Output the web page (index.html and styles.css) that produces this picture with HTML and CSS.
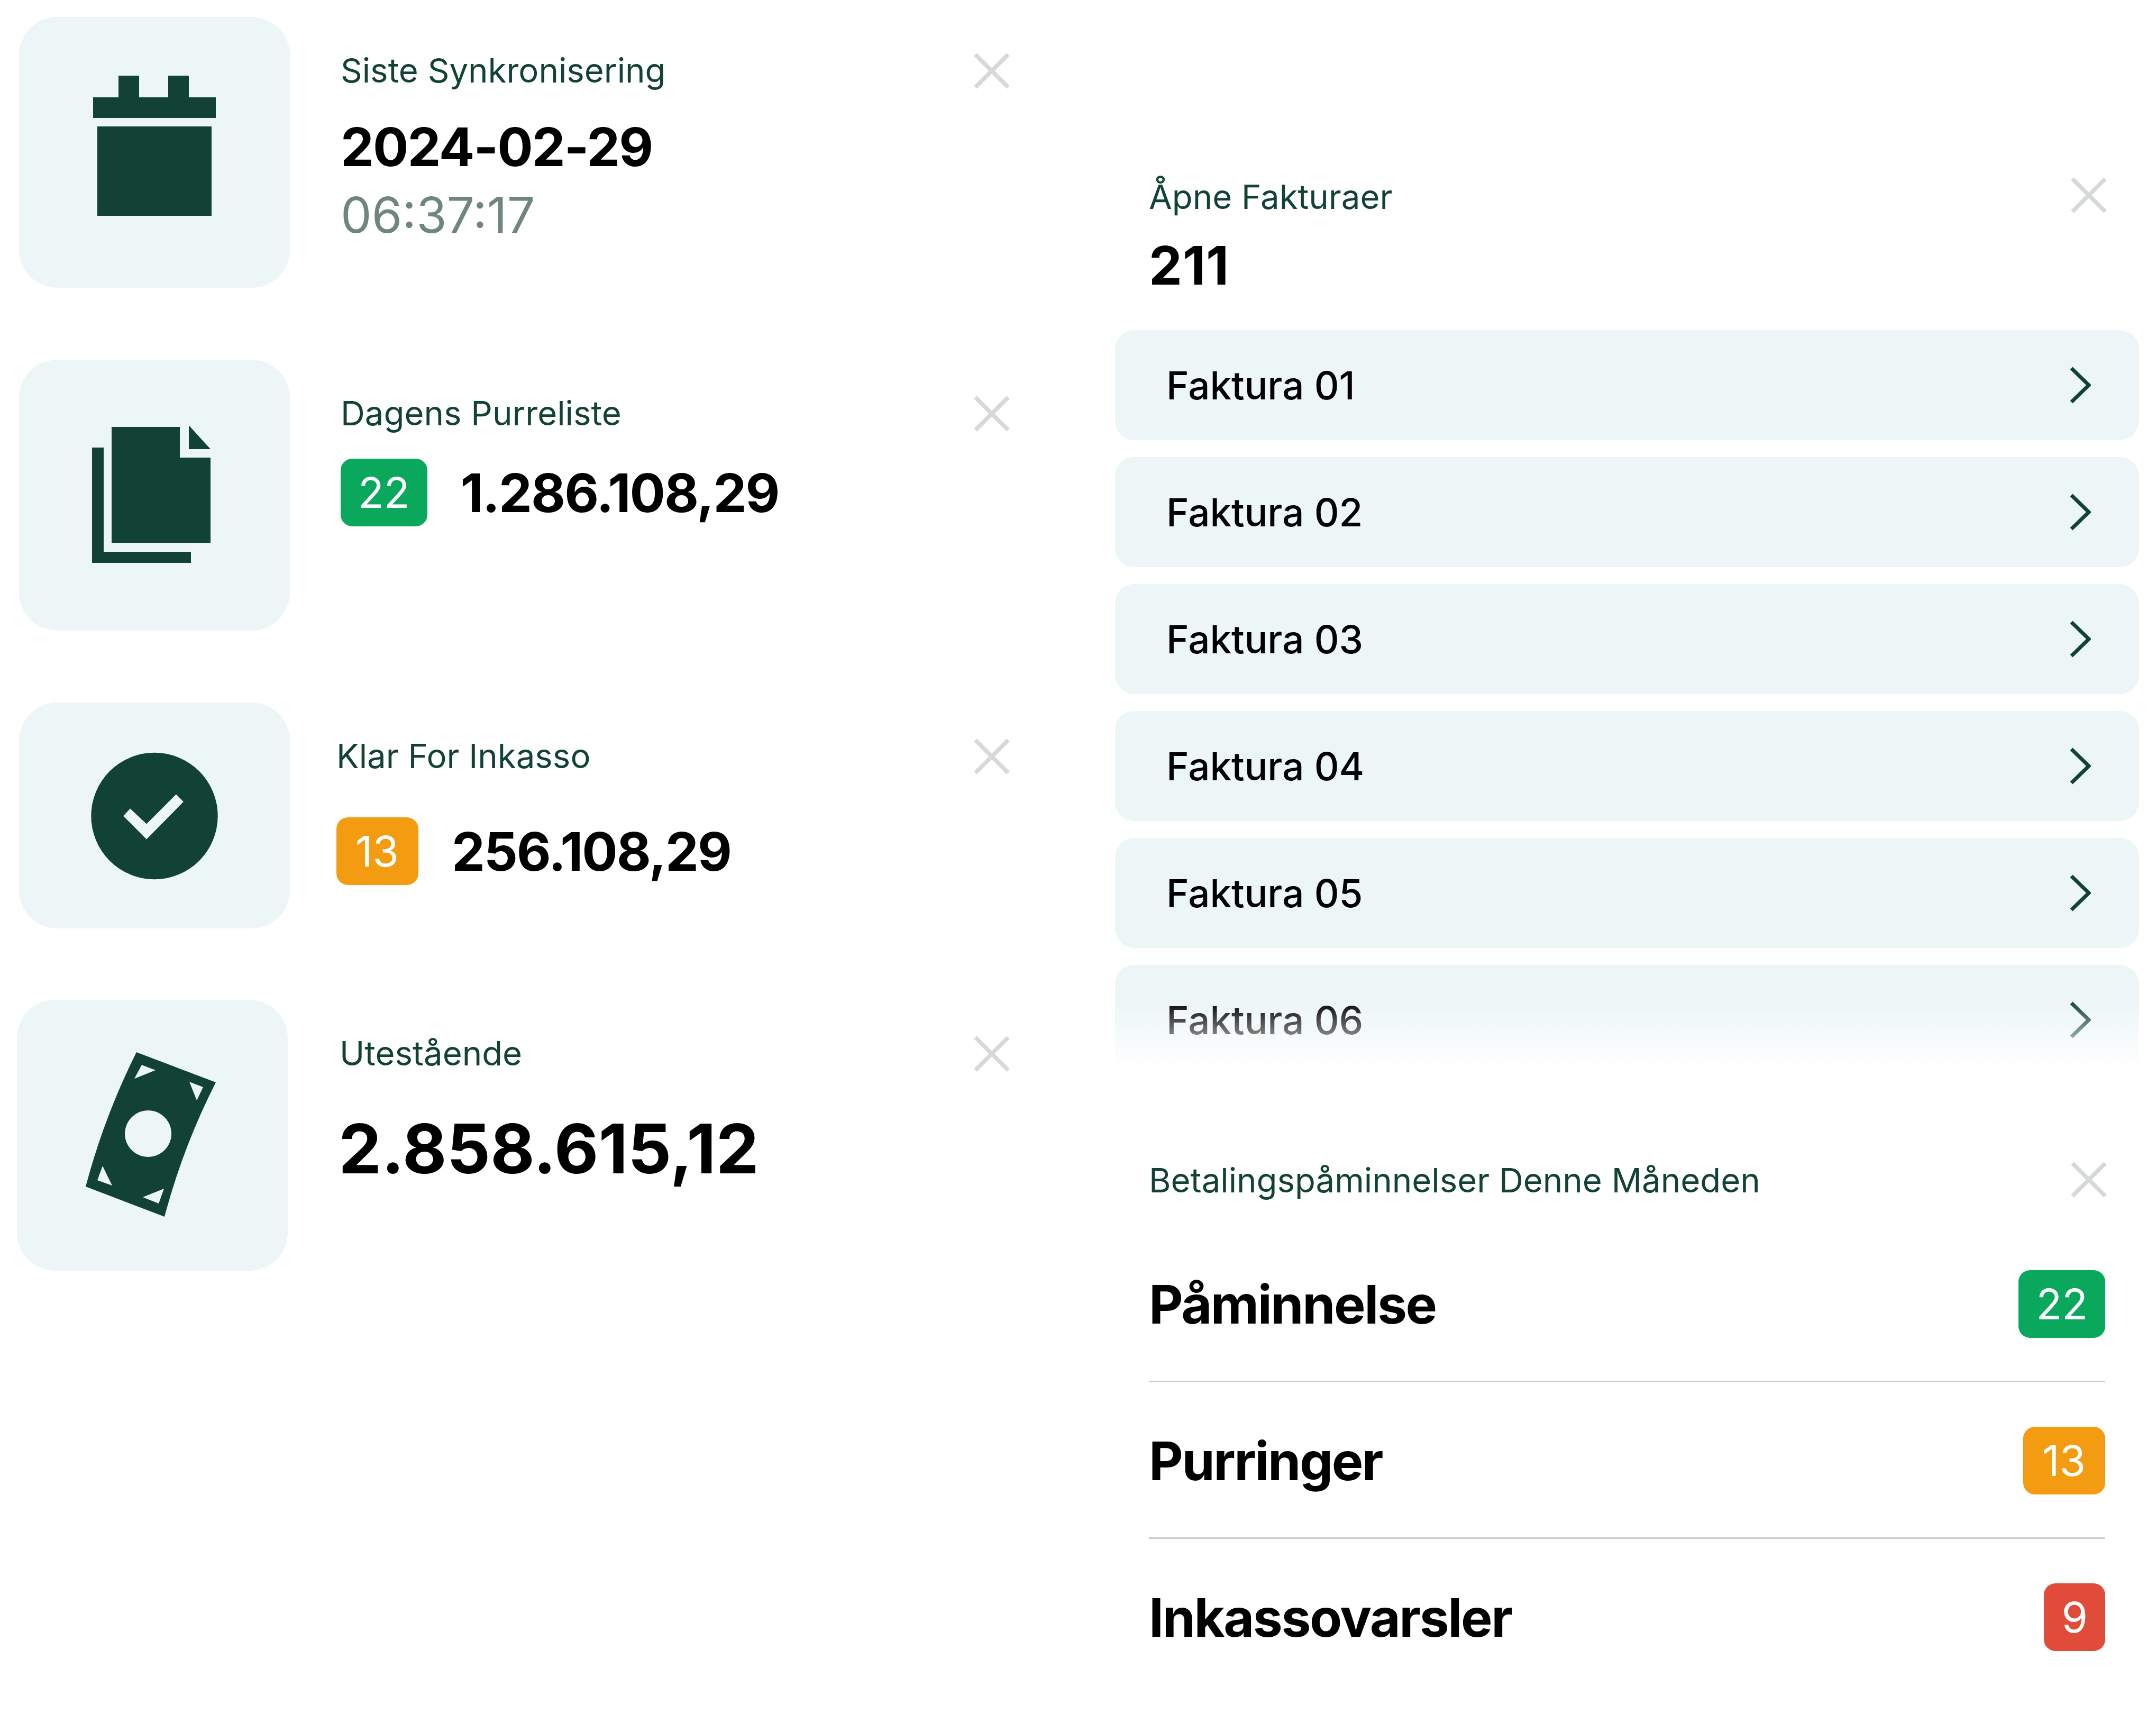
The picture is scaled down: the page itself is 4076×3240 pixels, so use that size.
FILE: index.html
```html
<!DOCTYPE html>
<html lang="no">
<head>
  <meta charset="UTF-8" />
  <title>Oversikt</title>
  <link rel="stylesheet" href="styles.css">
</head>
<body>
  <svg class="sprite" width="0" height="0">
    <symbol id="close" viewBox="0 0 68 68"><path d="M3 3 65 65M65 3 3 65" fill="none" stroke="currentColor" stroke-width="8"/></symbol>
    <symbol id="chevron" viewBox="0 0 40 70"><path d="M3 3 36 35 3 67" fill="none" stroke="currentColor" stroke-width="7"/></symbol>
  </svg>

  <div class="page">
    <div class="stats">
      <div class="stat">
        <div class="tile">
          <svg class="tile-icon" viewBox="0 0 512 512"><path d="M188 111h39v41h55v-41h39v41h51v39H140v-39h48zM148 207h216v169H148z"/></svg>
        </div>
        <div class="stat-body">
          <div class="head"><span class="label">Siste Synkronisering</span><svg class="close"><use href="#close"/></svg></div>
          <div class="date">2024-02-29</div>
          <div class="time">06:37:17</div>
        </div>
      </div>

      <div class="stat">
        <div class="tile">
          <svg class="tile-icon" viewBox="0 0 512 512"><path d="M175 127h129v58h58v161H175zM321 124l41 45h-41zM138 166h22v197h165v21H138z"/></svg>
        </div>
        <div class="stat-body">
          <div class="head"><span class="label">Dagens Purreliste</span><svg class="close"><use href="#close"/></svg></div>
          <div class="amount-row">
            <span class="badge green">22</span>
            <span class="amount">1.286.108,29</span>
          </div>
        </div>
      </div>

      <div class="stat stat-tight">
        <div class="tile tile-short">
          <svg class="tile-icon" viewBox="0 0 512 428"><circle cx="256" cy="215" r="120"/><path class="tick" d="M197 215l44 44 70-71-14-14-56 56-31-29z"/></svg>
        </div>
        <div class="stat-body">
          <div class="head"><span class="label">Klar For Inkasso</span><svg class="close"><use href="#close"/></svg></div>
          <div class="amount-row amount-row-low">
            <span class="badge orange">13</span>
            <span class="amount">256.108,29</span>
          </div>
        </div>
      </div>

      <div class="stat stat-shift">
        <div class="tile">
          <svg class="tile-icon" viewBox="0 0 512 512"><path fill-rule="evenodd" d="M226 99 376 156Q314 278 279 410L130 353Q165 221 226 99zM236 123 222 149 262 133zM326 155 340 190 352 165zM162 314 152 341 180 351zM238 373 268 385 278 357zM248 209a44 44 0 1 0 .1 0z"/></svg>
        </div>
        <div class="stat-body">
          <div class="head"><span class="label">Utestående</span><svg class="close"><use href="#close"/></svg></div>
          <div class="total">2.858.615,12</div>
        </div>
      </div>
    </div>

    <div class="side">
      <div class="panel">
        <div class="head"><span class="label label-low">Åpne Fakturaer</span><svg class="close"><use href="#close"/></svg></div>
        <div class="count">211</div>
      </div>
      <div class="invoices">
        <a class="invoice"><span>Faktura 01</span><svg class="chevron"><use href="#chevron"/></svg></a>
        <a class="invoice"><span>Faktura 02</span><svg class="chevron"><use href="#chevron"/></svg></a>
        <a class="invoice"><span>Faktura 03</span><svg class="chevron"><use href="#chevron"/></svg></a>
        <a class="invoice"><span>Faktura 04</span><svg class="chevron"><use href="#chevron"/></svg></a>
        <a class="invoice"><span>Faktura 05</span><svg class="chevron"><use href="#chevron"/></svg></a>
        <a class="invoice"><span>Faktura 06</span><svg class="chevron"><use href="#chevron"/></svg></a>
        <div class="fade"></div>
      </div>
      <div class="panel panel-reminders">
        <div class="head"><span class="label label-mid">Betalingspåminnelser Denne Måneden</span><svg class="close"><use href="#close"/></svg></div>
        <div class="reminders">
          <div class="reminder"><span class="reminder-name">Påminnelse</span><span class="badge green">22</span></div>
          <div class="reminder"><span class="reminder-name">Purringer</span><span class="badge orange">13</span></div>
          <div class="reminder"><span class="reminder-name">Inkassovarsler</span><span class="badge red">9</span></div>
        </div>
      </div>
    </div>
  </div>
</body>
</html>
```

FILE: styles.css
```css
body {
  margin: 0;
  background: #fff;
  font-family: Inter, "Noto Sans", sans-serif;
  color: #000;
}
.sprite {
  position: absolute;
}
.page {
  display: flex;
  width: 4076px;
  height: 3240px;
}

/* left column */
.stats {
  display: flex;
  flex-direction: column;
  gap: 136px;
  width: 2108px;
  padding: 32px 0 0 36px;
  box-sizing: border-box;
}
.stat {
  display: flex;
  gap: 96px;
  width: 1873px;
}
.stat-tight {
  gap: 88px;
}
.stat-shift {
  gap: 98px;
  width: 1877px;
  margin-left: -4px;
  margin-top: -1px;
}
.tile {
  flex: none;
  width: 512px;
  height: 512px;
  background: #ecf6f7;
  border-radius: 72px;
}
.tile-short {
  height: 427px;
}
.tile-icon {
  display: block;
  width: 100%;
  height: 100%;
  fill: #124236;
}
.tick {
  fill: #ecf6f7;
}
.stat-body {
  flex: 1;
  padding-top: 68px;
}
.head {
  display: flex;
  justify-content: space-between;
  align-items: center;
  height: 68px;
}
.label {
  margin-bottom: 3px;
  font-size: 63.5px;
  color: #124236;
}
.label-low {
  padding-top: 8px;
}
.label-mid {
  margin-bottom: 0;
}
.close {
  flex: none;
  width: 68px;
  height: 68px;
  color: #d5d9d8;
}
.date {
  margin-top: 47px;
  font-size: 100px;
  line-height: 126px;
  font-weight: 700;
  letter-spacing: -2px;
}
.time {
  font-size: 93px;
  line-height: 130px;
  color: #6e8580;
}
.amount-row {
  display: flex;
  align-items: center;
  gap: 63px;
  margin-top: 51px;
}
.amount-row-low {
  margin-top: 81px;
}
.amount {
  font-size: 100px;
  font-weight: 700;
  letter-spacing: -2px;
}
.total {
  margin-top: 65px;
  margin-left: -2px;
  font-size: 129px;
  line-height: 160px;
  font-weight: 700;
}
.badge {
  box-sizing: border-box;
  height: 128px;
  padding: 0 33px;
  border-radius: 22px;
  font-size: 80px;
  line-height: 128px;
  color: #fff;
}
.orange {
  padding: 0 37px 0 36px;
}
.green { background: #09a85d; }
.orange { background: #f39c12; }
.red { background: #e04b3a; }

/* right column */
.side {
  width: 1936px;
  padding-top: 335px;
}
.panel {
  padding: 0 61px 0 64px;
}
.count {
  margin-top: 36px;
  font-size: 100px;
  line-height: 126px;
  font-weight: 700;
  letter-spacing: 1px;
}
.invoices {
  position: relative;
  display: flex;
  flex-direction: column;
  gap: 32px;
  margin-top: 59px;
}
.invoice {
  display: flex;
  justify-content: space-between;
  align-items: center;
  height: 208px;
  padding: 0 91px 0 97px;
  background: #ecf6f7;
  border-radius: 36px;
  font-size: 72.6px;
  font-weight: 500;
}
.invoice span {
  padding-top: 2px;
}
.chevron {
  width: 40px;
  height: 70px;
  color: #124236;
}
.fade {
  position: absolute;
  left: 0;
  right: 0;
  bottom: -4px;
  height: 146px;
  background: linear-gradient(rgba(255,255,255,0), #fff 90%);
}
.panel-reminders {
  margin-top: 164px;
}
.reminders {
  margin-top: 53px;
  padding-right: 3px;
}
.reminder {
  display: flex;
  justify-content: space-between;
  align-items: center;
  padding: 84px 0;
  border-top: 3px solid #c9cfce;
  margin-top: -3px;
}
.reminder:first-child {
  border-top-color: transparent;
}
.reminder-name {
  font-size: 100px;
  font-weight: 700;
  letter-spacing: -2.4px;
}
```
